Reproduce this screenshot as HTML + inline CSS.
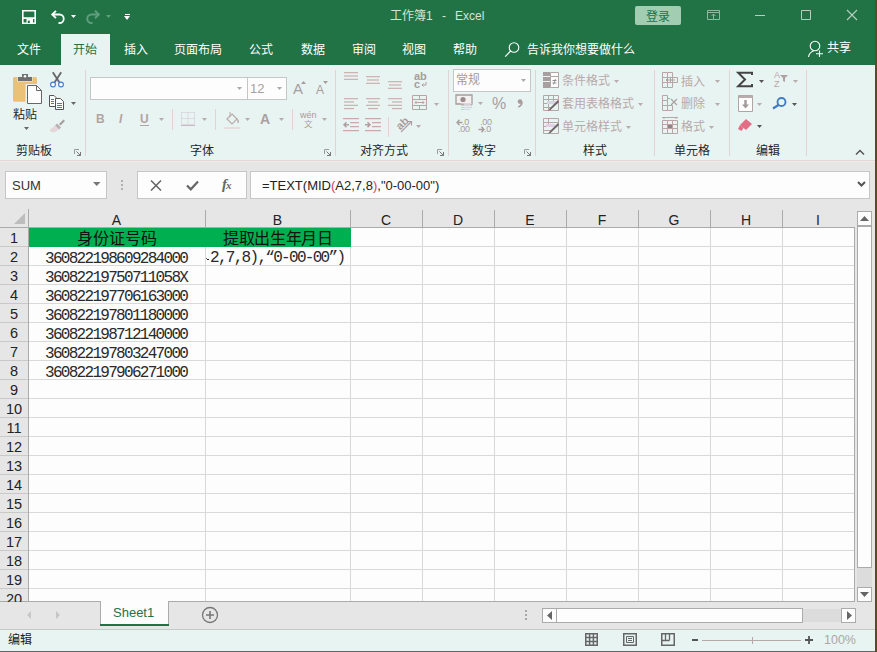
<!DOCTYPE html>
<html lang="zh-CN"><head><meta charset="utf-8">
<style>
*{box-sizing:border-box}
html,body{margin:0;padding:0}
body{width:877px;height:652px;overflow:hidden;position:relative;background:#E6E6E6;font-family:"Liberation Sans",sans-serif;color:#222}
.a{position:absolute}
.t{position:absolute;white-space:nowrap;line-height:1}
svg{position:absolute;overflow:visible}
#top{left:0;top:0;width:875px;height:65px;background:#217346}
#edge{left:875px;top:0;width:2px;height:652px;background:#5a4a2a}
#rib{left:0;top:65px;width:875px;height:95px;background:#E8F4F2}
.tab{color:#fff;font-size:12px;top:44px !important}
.gl{font-size:12px;color:#262626;margin-top:2px}
.sep{position:absolute;width:1px;background:#E2D4D4}
.dis{color:#B9A9A9;font-size:12px}
.dd{position:absolute;width:0;height:0;border-left:3px solid transparent;border-right:3px solid transparent;border-top:3px solid #B9AEAE}
.ddk{border-top-color:#555}
.box{position:absolute;background:#FDFDFD;border:1px solid #C6C6C6}
.hl{position:absolute;height:1px;background:#D9D9D9}
.vl{position:absolute;width:1px;background:#D9D9D9}
.ch{position:absolute;font-size:14px;color:#222;text-align:center;top:213px;line-height:14px}
.rh{position:absolute;left:0;width:28px;font-size:14.5px;color:#222;text-align:center;line-height:14px}
.num{position:absolute;font-family:"Liberation Mono",monospace;font-size:16px;letter-spacing:-1.7px;line-height:16px;color:#2a2a2a}
</style></head><body>
<div id="top" class="a"></div>
<div id="edge" class="a"></div>
<div id="rib" class="a"></div>
<div class="a" style="left:0;top:160px;width:875px;height:1px;background:#E6D6D6"></div>
<div class="a" style="left:0;top:161px;width:875px;height:1px;background:#EDEDED"></div>

<!-- title bar -->
<div class="t" style="left:390px;top:10px;font-size:12px;color:#D2E3D8">工作簿1</div><div class="t" style="left:442px;top:10px;font-size:12px;color:#D2E3D8">-</div><div class="t" style="left:455px;top:10px;font-size:12px;color:#D2E3D8">Excel</div>
<div class="a" style="left:635px;top:6px;width:46px;height:19px;background:#A3CDB3;border-radius:2px"></div>
<div class="t" style="left:646px;top:11px;font-size:12px;color:#217346">登录</div>

<!-- tabs -->
<div class="a" style="left:61px;top:34px;width:49px;height:31px;background:#E8F4F2"></div>
<div class="t tab" style="left:17px;top:42px">文件</div>
<div class="t tab" style="left:73px;top:42px;color:#217346">开始</div>
<div class="t tab" style="left:124px;top:42px">插入</div>
<div class="t tab" style="left:174px;top:42px">页面布局</div>
<div class="t tab" style="left:249px;top:42px">公式</div>
<div class="t tab" style="left:301px;top:42px">数据</div>
<div class="t tab" style="left:352px;top:42px">审阅</div>
<div class="t tab" style="left:402px;top:42px">视图</div>
<div class="t tab" style="left:453px;top:42px">帮助</div>
<div class="t tab" style="left:527px;top:42px">告诉我你想要做什么</div>
<div class="t" style="left:827px;top:42px;color:#fff;font-size:12px">共享</div>

<!-- group labels -->
<div class="t gl" style="left:16px;top:143px">剪贴板</div>
<div class="t gl" style="left:190px;top:143px">字体</div>
<div class="t gl" style="left:360px;top:143px">对齐方式</div>
<div class="t gl" style="left:472px;top:143px">数字</div>
<div class="t gl" style="left:583px;top:143px">样式</div>
<div class="t gl" style="left:674px;top:143px">单元格</div>
<div class="t gl" style="left:756px;top:143px">编辑</div>
<div class="t gl" style="left:13px;top:107px">粘贴</div>

<div class="sep" style="left:85px;top:70px;height:86px"></div>
<div class="sep" style="left:335px;top:70px;height:86px"></div>
<div class="sep" style="left:448px;top:70px;height:86px"></div>
<div class="sep" style="left:535px;top:70px;height:86px"></div>
<div class="sep" style="left:654px;top:70px;height:86px"></div>
<div class="sep" style="left:729px;top:70px;height:86px"></div>
<div class="sep" style="left:806px;top:70px;height:86px"></div>

<!--rib--><svg style="left:22px;top:10px" width="14" height="14"><path d="M0.8 0.8H13.2V13.2H0.8Z" fill="none" stroke="#fff" stroke-width="1.6"/><path d="M0.8 8.1H13.2" stroke="#fff" stroke-width="1.7"/><path d="M4.5 9H11V13H4.5Z" fill="#fff"/><path d="M5.8 10.6H7.8V13H5.8Z" fill="#217346"/></svg>
<svg style="left:50px;top:9px" width="16" height="16"><path d="M2.5 5.5H9.5A4.2 4.2 0 0 1 9.5 14H8.5" fill="none" stroke="#fff" stroke-width="1.8"/><path d="M6 1.8L2.2 5.5L6 9.2" fill="none" stroke="#fff" stroke-width="1.8"/></svg>
<svg style="left:71px;top:15px" width="5" height="3"><path d="M0 0H5L2.5 3Z" fill="#fff"/></svg>
<svg style="left:85px;top:9px" width="16" height="16"><path d="M13.5 5.5H6.5A4.2 4.2 0 0 0 6.5 14H7.5" fill="none" stroke="#5E9E7C" stroke-width="2"/><path d="M10 1.8L13.8 5.5L10 9.2" fill="none" stroke="#5E9E7C" stroke-width="2"/></svg>
<svg style="left:106px;top:15px" width="5" height="3"><path d="M0 0H5L2.5 3Z" fill="#5E9E7C"/></svg>
<div class="a" style="left:125px;top:14px;width:5px;height:1px;background:#fff"></div>
<svg style="left:124px;top:16px" width="6" height="4"><path d="M0 0H6L3.0 4Z" fill="#fff"/></svg>
<svg style="left:707px;top:10px" width="13" height="10"><path d="M0.5 0.5H12.5V9.5H0.5ZM0.5 2.5H12.5M6.5 9V4M4.5 6L6.5 4L8.5 6" fill="none" stroke="#8FB9A0" stroke-width="1"/></svg>
<div class="a" style="left:755px;top:15px;width:10px;height:1px;background:#B5D0C0"></div>
<svg style="left:801px;top:10px" width="10" height="10"><path d="M0.5 0.5H9.5V9.5H0.5Z" fill="none" stroke="#B5D0C0"/></svg>
<svg style="left:847px;top:10px" width="10" height="10"><path d="M0 0L10 10M10 0L0 10" stroke="#B5D0C0" stroke-width="1.1"/></svg>
<svg style="left:504px;top:42px" width="16" height="16"><circle cx="10" cy="5.5" r="4.8" fill="none" stroke="#fff" stroke-width="1.1"/><path d="M6.6 9L1.2 14.6" stroke="#fff" stroke-width="1.2"/></svg>
<svg style="left:807px;top:40px" width="17" height="18"><circle cx="8" cy="6" r="4.8" fill="none" stroke="#fff" stroke-width="1.1"/><path d="M1.5 17A7.5 7.5 0 0 1 6.5 11" fill="none" stroke="#fff" stroke-width="1.1"/><path d="M12.5 10.5V17M9 13.7H16" stroke="#fff" stroke-width="1.1"/></svg>
<svg style="left:12px;top:73px" width="31" height="32"><rect x="1" y="4" width="24" height="24.7" rx="1.5" fill="#EBC177"/><path d="M5.5 3.5H20.5V8.5H5.5Z" fill="#E8F4F2"/><path d="M6 4H20V8H6Z" fill="#707070"/><path d="M10 1H16V4H10Z" fill="#707070"/><circle cx="13" cy="3.2" r="1.3" fill="#FDFDFD"/><path d="M13.5 11H25L30.5 16.5V32H13.5Z" fill="#E8F4F2"/><path d="M15.5 12.5H24.5L29.5 17.5V30.5H15.5Z" fill="#FDFDFD" stroke="#666" stroke-width="1"/><path d="M24.5 12.5V17.5H29.5" fill="none" stroke="#666" stroke-width="1"/></svg>
<svg style="left:24px;top:127px" width="5" height="3"><path d="M0 0H5L2.5 3Z" fill="#666"/></svg>
<svg style="left:49px;top:72px" width="16" height="16"><path d="M3.8 0.3L10.3 10.3M12.2 0.3L5.7 10.3" fill="none" stroke="#666" stroke-width="1.8"/><circle cx="4" cy="12.5" r="2.4" fill="#FDFDFD" stroke="#3F7BC2" stroke-width="1.1"/><circle cx="12" cy="12.5" r="2.4" fill="#FDFDFD" stroke="#3F7BC2" stroke-width="1.1"/></svg>
<svg style="left:49px;top:95px" width="16" height="16"><path d="M0.5 0.5H5L7 2.5V11.5H0.5Z" fill="#FDFDFD" stroke="#555"/><path d="M2 4.5H5M2 6.5H5M2 8.5H5" stroke="#3F7BC2"/><path d="M6.5 3.5H11.5L14.5 6.5V14.5H6.5Z" fill="#FDFDFD" stroke="#555"/><path d="M8 8.5H13M8 10.5H13M8 12.5H13" stroke="#3F7BC2"/></svg>
<svg style="left:71px;top:102px" width="5" height="3"><path d="M0 0H5L2.5 3Z" fill="#666"/></svg>
<svg style="left:49px;top:118px" width="17" height="15"><path d="M10 6L14.5 1.5L16 3L11.5 7.5Z" fill="#A89C9C"/><path d="M8 5.5L12 9.5L10 11.5L6 7.5Z" fill="#B8AEAE"/><path d="M6 7.5L10 11.5L5 14.5L1.5 13.5L0.5 12Z" fill="#E6D6DA"/></svg>
<svg style="left:74px;top:149px" width="7" height="7"><path d="M0.5 5V0.5H5" fill="none" stroke="#9A9A9A"/><path d="M2.5 2.5L6.5 6.5M6.5 3V6.5H3" fill="none" stroke="#777" stroke-width="1"/></svg>
<div class="box" style="left:90px;top:77px;width:158px;height:23px"></div>
<div class="box" style="left:247px;top:77px;width:40px;height:23px"></div>
<svg style="left:237px;top:87px" width="5" height="3"><path d="M0 0H5L2.5 3Z" fill="#AFA8A8"/></svg>
<svg style="left:277px;top:87px" width="5" height="3"><path d="M0 0H5L2.5 3Z" fill="#AFA8A8"/></svg>
<div class="t" style="left:250px;top:82px;font-size:13px;color:#A9A0A0">12</div>
<div class="t" style="left:293px;top:81px;font-size:15px;color:#A89C9C">A</div>
<svg style="left:301px;top:81px" width="5" height="3"><path d="M0 3H5L2.5 0Z" fill="#A89C9C"/></svg>
<div class="t" style="left:316px;top:84px;font-size:12px;color:#A89C9C">A</div>
<svg style="left:323px;top:81px" width="5" height="3"><path d="M0 0H5L2.5 3Z" fill="#A89C9C"/></svg>
<div class="t" style="left:96px;top:113px;font-size:12px;font-weight:bold;color:#B3A4A4">B</div>
<div class="t" style="left:119px;top:113px;font-size:12px;font-style:italic;font-weight:bold;color:#B3A4A4">I</div>
<div class="t" style="left:140px;top:113px;font-size:12px;color:#B3A4A4;font-weight:bold">U</div>
<div class="a" style="left:140px;top:125px;width:9px;height:1px;background:#B3A4A4"></div>
<svg style="left:159px;top:118px" width="5" height="3"><path d="M0 0H5L2.5 3Z" fill="#B8ACAC"/></svg>
<div class="sep" style="left:172px;top:109px;height:21px"></div>
<svg style="left:181px;top:112px" width="14" height="14"><path d="M0.5 0.5H13.5V12.5H0.5ZM7 0.5V12.5M0.5 6.5H13.5" fill="none" stroke="#D0C2CC" stroke-width="1" stroke-dasharray="1 1"/><path d="M0 13.5H14" stroke="#C8B8C8" stroke-width="1"/></svg>
<svg style="left:202px;top:118px" width="5" height="3"><path d="M0 0H5L2.5 3Z" fill="#B8ACAC"/></svg>
<div class="sep" style="left:215px;top:109px;height:21px"></div>
<svg style="left:223px;top:110px" width="18" height="22"><path d="M4 9L9 4L14 9L9 14Z" fill="none" stroke="#BBAAAA" stroke-width="1.2"/><path d="M7 2V7" stroke="#BBAAAA"/><path d="M14 9Q16 11 15 13" fill="none" stroke="#BBAAAA" stroke-width="1.4"/><path d="M1 17H17V19H1Z" fill="#EADCDC"/></svg>
<svg style="left:245px;top:118px" width="5" height="3"><path d="M0 0H5L2.5 3Z" fill="#B8ACAC"/></svg>
<div class="t" style="left:260px;top:112px;font-size:14px;font-weight:bold;color:#ABA0A0">A</div>
<svg style="left:279px;top:118px" width="5" height="3"><path d="M0 0H5L2.5 3Z" fill="#B8ACAC"/></svg>
<div class="sep" style="left:292px;top:109px;height:21px"></div>
<div class="t" style="left:300px;top:111px;font-size:9px;color:#AA9999">wén</div>
<div class="t" style="left:304px;top:120px;font-size:8.5px;color:#A89C9C">文</div>
<svg style="left:322px;top:118px" width="5" height="3"><path d="M0 0H5L2.5 3Z" fill="#B8ACAC"/></svg>
<svg style="left:324px;top:149px" width="7" height="7"><path d="M0.5 5V0.5H5" fill="none" stroke="#9A9A9A"/><path d="M2.5 2.5L6.5 6.5M6.5 3V6.5H3" fill="none" stroke="#777" stroke-width="1"/></svg>
<svg style="left:344px;top:72px" width="16" height="16"><path d="M0 0.7H14" stroke="#C9A9A9" stroke-width="1.1"/><path d="M0 4.0H14" stroke="#C9A9A9" stroke-width="1.1"/><path d="M0 7.3H14" stroke="#C9A9A9" stroke-width="1.1"/></svg>
<svg style="left:366px;top:76px" width="16" height="16"><path d="M0 0.7H14" stroke="#C9A9A9" stroke-width="1.1"/><path d="M1 4.0H13" stroke="#C9A9A9" stroke-width="1.1"/><path d="M0 7.3H14" stroke="#C9A9A9" stroke-width="1.1"/></svg>
<svg style="left:388px;top:81px" width="16" height="16"><path d="M0 0.7H14" stroke="#C9A9A9" stroke-width="1.1"/><path d="M1 4.0H13" stroke="#C9A9A9" stroke-width="1.1"/><path d="M0 7.3H14" stroke="#C9A9A9" stroke-width="1.1"/></svg>
<div class="t" style="left:414px;top:72px;font-size:11px;font-weight:bold;color:#A89C9C;line-height:8px">ab<br>c</div>
<svg style="left:421px;top:82px" width="6" height="5"><path d="M5 0V3H1M2.5 1.5L1 3L2.5 4.5" fill="none" stroke="#B09C9C"/></svg>
<svg style="left:344px;top:98px" width="16" height="16"><path d="M0 0.7H14" stroke="#C9A9A9" stroke-width="1.1"/><path d="M0 4.0H10" stroke="#C9A9A9" stroke-width="1.1"/><path d="M0 7.3H14" stroke="#C9A9A9" stroke-width="1.1"/><path d="M0 10.599999999999998H10" stroke="#C9A9A9" stroke-width="1.1"/></svg>
<svg style="left:366px;top:98px" width="16" height="16"><path d="M0 0.7H14" stroke="#C9A9A9" stroke-width="1.1"/><path d="M2 4.0H12" stroke="#C9A9A9" stroke-width="1.1"/><path d="M0 7.3H14" stroke="#C9A9A9" stroke-width="1.1"/><path d="M2 10.599999999999998H12" stroke="#C9A9A9" stroke-width="1.1"/></svg>
<svg style="left:388px;top:98px" width="16" height="16"><path d="M0 0.7H14" stroke="#C9A9A9" stroke-width="1.1"/><path d="M4 4.0H14" stroke="#C9A9A9" stroke-width="1.1"/><path d="M0 7.3H14" stroke="#C9A9A9" stroke-width="1.1"/><path d="M4 10.599999999999998H14" stroke="#C9A9A9" stroke-width="1.1"/></svg>
<svg style="left:412px;top:95px" width="15" height="15"><path d="M0.5 0.5H14.5V14.5H0.5ZM0.5 4.5H14.5M0.5 10.5H14.5M7.5 0.5V4.5M7.5 10.5V14.5" fill="none" stroke="#B8A4A4"/><path d="M3 7.5H12M4.5 6L3 7.5L4.5 9M10.5 6L12 7.5L10.5 9" fill="none" stroke="#B8A4A4"/></svg>
<svg style="left:434px;top:103px" width="5" height="3"><path d="M0 0H5L2.5 3Z" fill="#B8ACAC"/></svg>
<svg style="left:343px;top:118px" width="17" height="15"><path d="M0 0.7H16M7 4.7H16M7 8.7H16M0 12.7H16" stroke="#C9A9A9" stroke-width="1.3"/><path d="M1 6.7H6M3.5 4.2L1 6.7L3.5 9.2" fill="none" stroke="#AFA0A0" stroke-width="1.5"/></svg>
<svg style="left:365px;top:118px" width="17" height="15"><path d="M0 0.7H16M7 4.7H16M7 8.7H16M0 12.7H16" stroke="#C9A9A9" stroke-width="1.3"/><path d="M0 6.7H5M2.5 4.2L5 6.7L2.5 9.2" fill="none" stroke="#AFA0A0" stroke-width="1.5"/></svg>
<div class="sep" style="left:388px;top:117px;height:20px"></div>
<div class="t" style="left:396px;top:118px;font-size:11px;font-weight:bold;color:#A89C9C;transform:rotate(-45deg);transform-origin:50% 50%">ab</div>
<svg style="left:398px;top:118px" width="15" height="15"><path d="M3 14L13 4M9.5 3.5H13.5V7.5" fill="none" stroke="#B09C9C" stroke-width="1.1"/></svg>
<svg style="left:416px;top:125px" width="5" height="3"><path d="M0 0H5L2.5 3Z" fill="#B8ACAC"/></svg>
<svg style="left:437px;top:149px" width="7" height="7"><path d="M0.5 5V0.5H5" fill="none" stroke="#9A9A9A"/><path d="M2.5 2.5L6.5 6.5M6.5 3V6.5H3" fill="none" stroke="#777" stroke-width="1"/></svg>
<div class="box" style="left:453px;top:69px;width:78px;height:23px"></div>
<div class="t" style="left:456px;top:74px;font-size:12px;color:#A59A9A">常规</div>
<svg style="left:521px;top:79px" width="5" height="3"><path d="M0 0H5L2.5 3Z" fill="#B0A8A8"/></svg>
<svg style="left:455px;top:94px" width="18" height="18"><path d="M1 1H17V10H1Z" fill="#F4F0F0" stroke="#A89A9A" stroke-width="1.3"/><circle cx="8" cy="5.5" r="2.6" fill="#9A8A8A"/><path d="M6 9.5H17M6 11.5H17M6 13.5H17M6 15.5H15" stroke="#DCC6CC" stroke-width="1.2"/><path d="M9 9H16V16H9Z" fill="#E6E2EE" opacity="0.6"/></svg>
<svg style="left:478px;top:102px" width="5" height="3"><path d="M0 0H5L2.5 3Z" fill="#B8ACAC"/></svg>
<div class="t" style="left:492px;top:96px;font-size:16px;color:#A89C9C">%</div>
<svg style="left:517px;top:99px" width="6" height="9"><circle cx="3" cy="2.6" r="2.3" fill="#A89C9C"/><path d="M5 3Q5 6.5 1.2 8" fill="none" stroke="#A89C9C" stroke-width="1.6"/></svg>
<div class="t" style="left:462px;top:119px;font-size:9px;line-height:7px;color:#A89C9C;letter-spacing:-0.2px">.0</div>
<svg style="left:456px;top:119px" width="7" height="7"><path d="M1 3.5H6.5M3.5 0.8L1 3.5L3.5 6.2" fill="none" stroke="#A89C9C" stroke-width="1.3"/></svg>
<div class="t" style="left:458px;top:126px;font-size:9px;line-height:7px;color:#A89C9C;letter-spacing:-0.2px">.00</div>
<div class="t" style="left:480px;top:119px;font-size:9px;line-height:7px;color:#A89C9C;letter-spacing:-0.2px">.00</div>
<div class="t" style="left:484px;top:126px;font-size:9px;line-height:7px;color:#A89C9C;letter-spacing:-0.2px">.0</div>
<svg style="left:478px;top:126px" width="7" height="7"><path d="M0.5 3.5H6M3.5 0.8L6 3.5L3.5 6.2" fill="none" stroke="#A89C9C" stroke-width="1.3"/></svg>
<svg style="left:524px;top:149px" width="7" height="7"><path d="M0.5 5V0.5H5" fill="none" stroke="#9A9A9A"/><path d="M2.5 2.5L6.5 6.5M6.5 3V6.5H3" fill="none" stroke="#777" stroke-width="1"/></svg>
<svg style="left:543px;top:72px" width="16" height="17"><path d="M0 0H7V4H0ZM0 5H7V9H0ZM0 10H7V16H0Z" fill="#A8A0A0"/><path d="M7.5 0.5H15.5V4.5H7.5ZM7.5 4.5H15.5V15.5H7.5Z" fill="#FDFDFD" stroke="#B0A4A4"/><path d="M9.5 8.5H13.5M9.5 11H13.5M12.5 7L10.5 12.5" stroke="#888" stroke-width="0.9"/></svg>
<div class="t dis" style="left:562px;top:75px">条件格式</div>
<svg style="left:614px;top:80px" width="5" height="3"><path d="M0 0H5L2.5 3Z" fill="#B8ACAC"/></svg>
<svg style="left:543px;top:95px" width="16" height="16"><path d="M0.5 0.5H15.5V15.5H0.5ZM0.5 4.5H15.5M0.5 8.5H12M0.5 12.5H8M5.5 0.5V15.5M10.5 0.5V9" fill="none" stroke="#B8A6A6"/><path d="M4 6H15V9H4Z" fill="#DCD2E4"/><path d="M15 5L7 13L5 16L8 14.5L16 7Z" fill="#6E6666"/></svg>
<div class="t dis" style="left:562px;top:98px">套用表格格式</div>
<svg style="left:638px;top:103px" width="5" height="3"><path d="M0 0H5L2.5 3Z" fill="#B8ACAC"/></svg>
<svg style="left:543px;top:118px" width="16" height="16"><path d="M0.5 0.5H15.5V15.5H0.5ZM0.5 4.5H15.5M0.5 8.5H12M0.5 12.5H8M5.5 0.5V9" fill="none" stroke="#B8A6A6"/><path d="M3 6H12V9H3Z" fill="#DCD2E4"/><path d="M15 5L7 13L5 16L8 14.5L16 7Z" fill="#6E6666"/></svg>
<div class="t dis" style="left:562px;top:121px">单元格样式</div>
<svg style="left:626px;top:126px" width="5" height="3"><path d="M0 0H5L2.5 3Z" fill="#B8ACAC"/></svg>
<svg style="left:662px;top:72px" width="16" height="16"><path d="M0.5 0.5H5.5V15.5H0.5ZM0.5 5.5H10.5M0.5 10.5H10.5M5.5 0.5H10.5V15.5H5.5M8.5 5.5V10.5H15.5V5.5Z" fill="none" stroke="#B8A6A6"/><path d="M13 8H4M6 6L4 8L6 10" fill="none" stroke="#AAA0A0"/></svg>
<div class="t dis" style="left:681px;top:76px">插入</div>
<svg style="left:715px;top:80px" width="5" height="3"><path d="M0 0H5L2.5 3Z" fill="#B8ACAC"/></svg>
<svg style="left:662px;top:95px" width="16" height="16"><path d="M0.5 0.5H5.5V15.5H0.5ZM0.5 5.5H5.5M0.5 10.5H10.5M5.5 10.5V15.5H10.5V10.5M5.5 3.5H8" fill="none" stroke="#B8A6A6"/><path d="M9 4L15 10M15 4L9 10" stroke="#AAA0A0" stroke-width="1.2"/></svg>
<div class="t dis" style="left:681px;top:98px">删除</div>
<svg style="left:715px;top:103px" width="5" height="3"><path d="M0 0H5L2.5 3Z" fill="#B8ACAC"/></svg>
<svg style="left:662px;top:117px" width="16" height="17"><path d="M0.5 3.5H15.5V16.5H0.5ZM0.5 7.5H15.5M0.5 11.5H15.5M5.5 3.5V16.5M10.5 3.5V16.5" fill="none" stroke="#B8A6A6"/><path d="M0 0.5H16M2 0V2M14 0V2" stroke="#B8A6A6"/><path d="M6 8H10V11H6Z" fill="#888"/></svg>
<div class="t dis" style="left:681px;top:121px">格式</div>
<svg style="left:709px;top:126px" width="5" height="3"><path d="M0 0H5L2.5 3Z" fill="#B8ACAC"/></svg>
<svg style="left:737px;top:72px" width="16" height="15"><path d="M15 3V0.8H1.2L8 7.5L1.2 14.2H15V12" fill="none" stroke="#444" stroke-width="2"/></svg>
<svg style="left:759px;top:80px" width="5" height="3"><path d="M0 0H5L2.5 3Z" fill="#555"/></svg>
<div class="t" style="left:774px;top:71px;font-size:9px;line-height:9px;color:#B8A6A6">A<br>Z</div>
<svg style="left:780px;top:75px" width="8" height="8"><path d="M0 0H8L5 3V7L3 6V3Z" fill="#B0A0A0"/></svg>
<svg style="left:793px;top:80px" width="5" height="3"><path d="M0 0H5L2.5 3Z" fill="#B8ACAC"/></svg>
<svg style="left:738px;top:95px" width="15" height="17"><path d="M0.5 0.5H14.5V16.5H0.5Z" fill="#FDFDFD" stroke="#B0A4A4"/><path d="M0.5 0.5H14.5V3H0.5Z" fill="#B8ACAC"/><path d="M6.3 5H8.7V9.5H11L7.5 13.5L4 9.5H6.3Z" fill="#A09A9A"/></svg>
<svg style="left:757px;top:103px" width="5" height="3"><path d="M0 0H5L2.5 3Z" fill="#B8ACAC"/></svg>
<svg style="left:772px;top:97px" width="15" height="12"><circle cx="9.5" cy="5" r="4" fill="none" stroke="#3F7BC2" stroke-width="1.8"/><path d="M6.8 7.8L1 11.5" stroke="#3F7BC2" stroke-width="2.2"/></svg>
<svg style="left:792px;top:103px" width="5" height="3"><path d="M0 0H5L2.5 3Z" fill="#555"/></svg>
<svg style="left:738px;top:119px" width="14" height="13"><path d="M8 0L14 5L8 11L2 6Z" fill="#E26E86"/><path d="M2 6L5.5 9L3.5 12L0 10Z" fill="#E26E86"/></svg>
<svg style="left:757px;top:125px" width="5" height="3"><path d="M0 0H5L2.5 3Z" fill="#555"/></svg>
<svg style="left:855px;top:149px" width="10" height="6"><path d="M1 5.5L5 1.5L9 5.5" fill="none" stroke="#555" stroke-width="1.5"/></svg><!--/rib-->
<!-- formula bar -->
<div class="box" style="left:5px;top:171px;width:102px;height:28px"></div>
<div class="t" style="left:12px;top:179px;font-size:13px;color:#333">SUM</div>
<div class="box" style="left:137px;top:171px;width:110px;height:28px"></div>
<div class="box" style="left:250px;top:171px;width:620px;height:28px"></div>
<svg style="left:93px;top:182px" width="8" height="5"><path d="M0 0H7.5L3.75 4Z" fill="#777"/></svg>
<div class="a" style="left:121px;top:180px;width:2px;height:2px;background:#B0B0B0;box-shadow:0 4px #B0B0B0,0 8px #B0B0B0"></div>
<svg style="left:150px;top:180px" width="12" height="11"><path d="M1 0.5L11 10.5M11 0.5L1 10.5" stroke="#666" stroke-width="1.6"/></svg>
<svg style="left:186px;top:180px" width="13" height="11"><path d="M1 5.5L4.8 9.3L12 1.5" fill="none" stroke="#666" stroke-width="2.2"/></svg>
<div class="t" style="left:222px;top:177px;font-family:'Liberation Serif',serif;font-style:italic;font-weight:bold;font-size:15px;color:#666;letter-spacing:-1px">f<span style="font-size:11px">x</span></div>
<svg style="left:857px;top:181px" width="9" height="6"><path d="M1 1L4.5 4.5L8 1" fill="none" stroke="#555" stroke-width="2"/></svg>
<div class="t" style="left:262px;top:179px;font-size:13px;color:#222">=TEXT(MID<span style="color:#D0406A">(</span>A2,7,8<span style="color:#D0406A">)</span>,"0-00-00")</div>

<!-- grid -->
<div id="grid"><div class="a" style="left:0;top:209px;width:854px;height:18px;background:#E6E6E6"></div>
<div class="a" style="left:0;top:227px;width:855px;height:1px;background:#ABABAB"></div>
<div class="a" style="left:29px;top:228px;width:825px;height:373px;background:#FDFDFD"></div>
<div class="a" style="left:28px;top:209px;width:1px;height:392px;background:#ABABAB"></div>
<div class="a" style="left:854px;top:227px;width:1px;height:375px;background:#ABABAB"></div>
<div class="a" style="left:0;top:601px;width:855px;height:1px;background:#ABABAB"></div>
<svg style="left:14px;top:213px" width="12" height="12"><path d="M11 0V11H0Z" fill="#BDBDBD"/></svg>
<div class="a" style="left:29px;top:228px;width:322px;height:19px;background:#00B050"></div>
<div class="hl" style="left:351px;top:246px;width:503px"></div>
<div class="a" style="left:0;top:246px;width:28px;height:1px;background:#C9C9C9"></div>
<div class="hl" style="left:29px;top:265px;width:825px"></div>
<div class="a" style="left:0;top:265px;width:28px;height:1px;background:#C9C9C9"></div>
<div class="hl" style="left:29px;top:284px;width:825px"></div>
<div class="a" style="left:0;top:284px;width:28px;height:1px;background:#C9C9C9"></div>
<div class="hl" style="left:29px;top:303px;width:825px"></div>
<div class="a" style="left:0;top:303px;width:28px;height:1px;background:#C9C9C9"></div>
<div class="hl" style="left:29px;top:322px;width:825px"></div>
<div class="a" style="left:0;top:322px;width:28px;height:1px;background:#C9C9C9"></div>
<div class="hl" style="left:29px;top:341px;width:825px"></div>
<div class="a" style="left:0;top:341px;width:28px;height:1px;background:#C9C9C9"></div>
<div class="hl" style="left:29px;top:360px;width:825px"></div>
<div class="a" style="left:0;top:360px;width:28px;height:1px;background:#C9C9C9"></div>
<div class="hl" style="left:29px;top:379px;width:825px"></div>
<div class="a" style="left:0;top:379px;width:28px;height:1px;background:#C9C9C9"></div>
<div class="hl" style="left:29px;top:398px;width:825px"></div>
<div class="a" style="left:0;top:398px;width:28px;height:1px;background:#C9C9C9"></div>
<div class="hl" style="left:29px;top:417px;width:825px"></div>
<div class="a" style="left:0;top:417px;width:28px;height:1px;background:#C9C9C9"></div>
<div class="hl" style="left:29px;top:436px;width:825px"></div>
<div class="a" style="left:0;top:436px;width:28px;height:1px;background:#C9C9C9"></div>
<div class="hl" style="left:29px;top:455px;width:825px"></div>
<div class="a" style="left:0;top:455px;width:28px;height:1px;background:#C9C9C9"></div>
<div class="hl" style="left:29px;top:474px;width:825px"></div>
<div class="a" style="left:0;top:474px;width:28px;height:1px;background:#C9C9C9"></div>
<div class="hl" style="left:29px;top:493px;width:825px"></div>
<div class="a" style="left:0;top:493px;width:28px;height:1px;background:#C9C9C9"></div>
<div class="hl" style="left:29px;top:512px;width:825px"></div>
<div class="a" style="left:0;top:512px;width:28px;height:1px;background:#C9C9C9"></div>
<div class="hl" style="left:29px;top:531px;width:825px"></div>
<div class="a" style="left:0;top:531px;width:28px;height:1px;background:#C9C9C9"></div>
<div class="hl" style="left:29px;top:550px;width:825px"></div>
<div class="a" style="left:0;top:550px;width:28px;height:1px;background:#C9C9C9"></div>
<div class="hl" style="left:29px;top:569px;width:825px"></div>
<div class="a" style="left:0;top:569px;width:28px;height:1px;background:#C9C9C9"></div>
<div class="hl" style="left:29px;top:588px;width:825px"></div>
<div class="a" style="left:0;top:588px;width:28px;height:1px;background:#C9C9C9"></div>
<div class="vl" style="left:205px;top:247px;height:354px"></div>
<div class="a" style="left:205px;top:210px;width:1px;height:17px;background:#ABABAB"></div>
<div class="vl" style="left:350px;top:247px;height:354px"></div>
<div class="a" style="left:350px;top:210px;width:1px;height:17px;background:#ABABAB"></div>
<div class="vl" style="left:422px;top:228px;height:373px"></div>
<div class="a" style="left:422px;top:210px;width:1px;height:17px;background:#ABABAB"></div>
<div class="vl" style="left:494px;top:228px;height:373px"></div>
<div class="a" style="left:494px;top:210px;width:1px;height:17px;background:#ABABAB"></div>
<div class="vl" style="left:566px;top:228px;height:373px"></div>
<div class="a" style="left:566px;top:210px;width:1px;height:17px;background:#ABABAB"></div>
<div class="vl" style="left:638px;top:228px;height:373px"></div>
<div class="a" style="left:638px;top:210px;width:1px;height:17px;background:#ABABAB"></div>
<div class="vl" style="left:710px;top:228px;height:373px"></div>
<div class="a" style="left:710px;top:210px;width:1px;height:17px;background:#ABABAB"></div>
<div class="vl" style="left:782px;top:228px;height:373px"></div>
<div class="a" style="left:782px;top:210px;width:1px;height:17px;background:#ABABAB"></div>
<div class="ch" style="left:28px;width:177px">A</div>
<div class="ch" style="left:205px;width:145px">B</div>
<div class="ch" style="left:350px;width:72px">C</div>
<div class="ch" style="left:422px;width:72px">D</div>
<div class="ch" style="left:494px;width:72px">E</div>
<div class="ch" style="left:566px;width:72px">F</div>
<div class="ch" style="left:638px;width:72px">G</div>
<div class="ch" style="left:710px;width:72px">H</div>
<div class="ch" style="left:782px;width:72px">I</div>
<div class="rh" style="top:231px">1</div>
<div class="rh" style="top:250px">2</div>
<div class="rh" style="top:269px">3</div>
<div class="rh" style="top:288px">4</div>
<div class="rh" style="top:307px">5</div>
<div class="rh" style="top:326px">6</div>
<div class="rh" style="top:345px">7</div>
<div class="rh" style="top:364px">8</div>
<div class="rh" style="top:383px">9</div>
<div class="rh" style="top:402px">10</div>
<div class="rh" style="top:421px">11</div>
<div class="rh" style="top:440px">12</div>
<div class="rh" style="top:459px">13</div>
<div class="rh" style="top:478px">14</div>
<div class="rh" style="top:497px">15</div>
<div class="rh" style="top:516px">16</div>
<div class="rh" style="top:535px">17</div>
<div class="rh" style="top:554px">18</div>
<div class="rh" style="top:573px">19</div>
<div class="rh" style="top:592px">20</div></div><!--/grid-->
<div id="cells">
<div class="t" style="left:77px;top:231px;font-size:16px;color:#111">身份证号码</div>
<div class="t" style="left:223px;top:231px;font-size:16px;color:#111;letter-spacing:-0.35px">提取出生年月日</div>
<div class="num" style="left:45px;top:251px">360822198609284000</div>
<div class="num" style="left:45px;top:270px">36082219750711058X</div>
<div class="num" style="left:45px;top:289px">360822197706163000</div>
<div class="num" style="left:45px;top:308px">360822197801180000</div>
<div class="num" style="left:45px;top:327px">360822198712140000</div>
<div class="num" style="left:45px;top:346px">360822197803247000</div>
<div class="num" style="left:45px;top:365px">360822197906271000</div>
<div class="a" style="left:206px;top:247px;width:144px;height:18px;overflow:hidden">
<div class="a" style="left:1px;top:12px;width:2px;height:1px;background:#222"></div><div class="a" style="left:0px;top:11px;width:1px;height:1px;background:#666"></div><div class="num" style="left:4px;top:3px">2,7,8),“0-00-00”)</div></div>
</div>

<!-- vertical scrollbar -->
<div id="vsb">
<div class="box" style="left:857px;top:211px;width:15px;height:15px;border-color:#ABABAB"></div>
<svg style="left:860px;top:216px" width="9" height="5"><path d="M0 5L4.5 0L9 5Z" fill="#666"/></svg>
<div class="box" style="left:857px;top:226px;width:15px;height:342px;border-color:#ABABAB"></div>
<div class="a" style="left:857px;top:568px;width:15px;height:20px;background:#DCDCDC"></div>
<div class="box" style="left:857px;top:587px;width:15px;height:15px;border-color:#ABABAB"></div>
<svg style="left:860px;top:592px" width="9" height="5"><path d="M0 0L4.5 5L9 0Z" fill="#666"/></svg>
</div>
<!-- sheet tab bar -->
<div class="a" style="left:0;top:602px;width:875px;height:27px;background:#E6E6E6"></div>
<div class="a" style="left:0;top:629px;width:875px;height:1px;background:#C8C8C8"></div>
<svg style="left:27px;top:611px" width="5" height="8"><path d="M4 0V8L0 4Z" fill="#C6C6C6"/></svg>
<svg style="left:56px;top:611px" width="5" height="8"><path d="M0 0V8L4 4Z" fill="#C6C6C6"/></svg>
<div class="a" style="left:100px;top:601px;width:69px;height:24px;background:#FDFDFD;border-left:1px solid #ABABAB;border-right:1px solid #ABABAB"></div>
<div class="a" style="left:100px;top:624px;width:69px;height:2px;background:#217346"></div>
<div class="t" style="left:113px;top:606px;font-size:13px;color:#217346">Sheet1</div>
<svg style="left:201px;top:606px" width="18" height="18"><circle cx="9" cy="9" r="7.5" fill="none" stroke="#777" stroke-width="1.3"/><path d="M9 5V13M5 9H13" stroke="#777" stroke-width="1.6"/></svg>
<div class="a" style="left:525px;top:610px;width:2px;height:2px;background:#A8A8A8;box-shadow:0 4px #A8A8A8,0 8px #A8A8A8"></div>
<div class="box" style="left:542px;top:608px;width:15px;height:15px;border-color:#ABABAB"></div>
<svg style="left:547px;top:611px" width="5" height="9"><path d="M5 0V9L0 4.5Z" fill="#666"/></svg>
<div class="box" style="left:556px;top:608px;width:247px;height:15px;border-color:#ABABAB"></div>
<div class="a" style="left:803px;top:609px;width:38px;height:13px;background:#DCDCDC"></div>
<div class="box" style="left:841px;top:608px;width:15px;height:15px;border-color:#ABABAB"></div>
<svg style="left:847px;top:611px" width="5" height="9"><path d="M0 0V9L5 4.5Z" fill="#666"/></svg>
<!-- status bar -->
<div class="a" style="left:0;top:630px;width:875px;height:21px;background:#E8F4F2"></div>
<div class="a" style="left:0;top:651px;width:875px;height:1px;background:#666"></div>
<div class="t" style="left:8px;top:634px;font-size:12px;color:#222">编辑</div>
<svg style="left:585px;top:633px" width="13" height="13"><path d="M0.75 0.75H12.25V12.25H0.75ZM0.75 4.6H12.25M0.75 8.4H12.25M4.6 0.75V12.25M8.4 0.75V12.25" fill="none" stroke="#666" stroke-width="1.5"/></svg>
<svg style="left:623px;top:633px" width="14" height="13"><path d="M0.75 0.75H13.25V12.25H0.75Z" fill="none" stroke="#666" stroke-width="1.5"/><path d="M3.5 3.5H10.5V9.5H3.5ZM5 5.5H9M5 7.5H9" fill="none" stroke="#666" stroke-width="1"/></svg>
<svg style="left:661px;top:633px" width="14" height="13"><path d="M0.75 0.75H13.25V12.25H0.75Z" fill="none" stroke="#666" stroke-width="1.5"/><path d="M4.5 0.75V7.5M8.5 0.75V7.5M0.75 7.5H8.5" fill="none" stroke="#666" stroke-width="1.3"/></svg>
<div class="a" style="left:692px;top:639px;width:6px;height:2px;background:#555"></div>
<div class="a" style="left:702px;top:640px;width:99px;height:1px;background:#B8A8A8"></div>
<div class="a" style="left:752px;top:637px;width:1px;height:7px;background:#B8A8A8"></div>
<svg style="left:805px;top:636px" width="8" height="8"><path d="M4 0V8M0 4H8" stroke="#555" stroke-width="1.8"/></svg>
<div class="t" style="left:824px;top:634px;font-size:12.5px;color:#AFA5A5">100%</div>
</body></html>
